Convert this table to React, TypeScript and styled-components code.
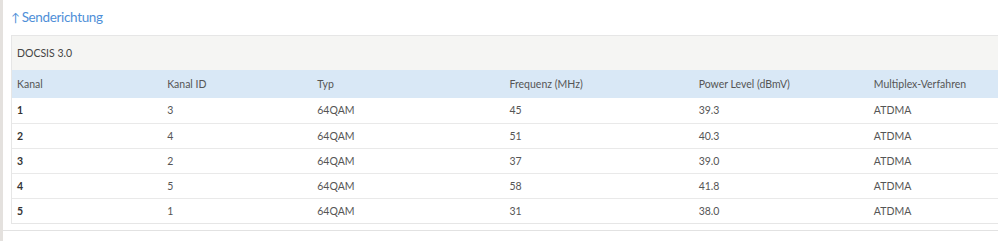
import React from "react";
import styled, { createGlobalStyle } from "styled-components";

const Global = createGlobalStyle`
  html, body { margin: 0; padding: 0; background: #ffffff; }
  body { font-family: Lato, "Open Sans", sans-serif; }
`;

const Page = styled.div`
  width: 998px;
  height: 241px;
  box-sizing: border-box;
  border-left: 3px solid #e4e1de;
  overflow: hidden;
`;

const Section = styled.section`
  border-bottom: 1px solid #e2e2e2;
  padding: 0 0 6px 8px;
`;

const Title = styled.h2`
  margin: 0;
  height: 35px;
  display: flex;
  align-items: center;
  gap: 2px;
  padding-bottom: 1px;
  box-sizing: border-box;
  font-size: 13.5px;
  letter-spacing: -0.35px;
  font-weight: 400;
  color: #4f8fd8;
`;

const Arrow = styled.span`
  font-size: 12px;
`;

const Panel = styled.div`
  width: 1000px;
  background: #f5f5f3;
  border: 1px solid #e6e6e6;
  border-right: none;
`;

const Caption = styled.div`
  height: 34px;
  display: flex;
  align-items: center;
  padding-left: 5px;
  font-size: 10.5px;
  color: #444;
`;

const Table = styled.table`
  width: 100%;
  border-collapse: collapse;
  table-layout: fixed;
  font-size: 10.5px;
`;

const HeadRow = styled.tr`
  background: #d9e8f6;
  height: 28px;
`;

const Th = styled.th<{ $w: number }>`
  box-sizing: border-box;
  width: ${(p) => p.$w}px;
  text-align: left;
  font-weight: 400;
  color: #555;
  padding: 0 0 0 5px;
`;

const Row = styled.tr`
  background: #fff;
  height: 25px;
  border-top: 1px solid #e9e9e9;
  &:first-of-type { border-top: none; }
`;

const Td = styled.td<{ $strong?: boolean }>`
  padding: 0 0 0 5px;
  color: ${(p) => (p.$strong ? "#333" : "#555")};
  font-weight: ${(p) => (p.$strong ? 700 : 400)};
`;

const cols = [
  { label: "Kanal", w: 150 },
  { label: "Kanal ID", w: 150 },
  { label: "Typ", w: 192 },
  { label: "Frequenz (MHz)", w: 189 },
  { label: "Power Level (dBmV)", w: 175 },
  { label: "Multiplex-Verfahren", w: 143 },
];

const rows = [
  ["1", "3", "64QAM", "45", "39.3", "ATDMA"],
  ["2", "4", "64QAM", "51", "40.3", "ATDMA"],
  ["3", "2", "64QAM", "37", "39.0", "ATDMA"],
  ["4", "5", "64QAM", "58", "41.8", "ATDMA"],
  ["5", "1", "64QAM", "31", "38.0", "ATDMA"],
];

export default function App() {
  return (
    <>
      <Global />
      <Page>
        <Section>
          <Title>
            <Arrow>↑</Arrow>
            <span>Senderichtung</span>
          </Title>
          <Panel>
            <Caption>DOCSIS 3.0</Caption>
            <Table>
              <thead>
                <HeadRow>
                  {cols.map((c) => (
                    <Th key={c.label} $w={c.w}>
                      {c.label}
                    </Th>
                  ))}
                </HeadRow>
              </thead>
              <tbody>
                {rows.map((r) => (
                  <Row key={r[0]}>
                    {r.map((v, i) => (
                      <Td key={i} $strong={i === 0}>
                        {v}
                      </Td>
                    ))}
                  </Row>
                ))}
              </tbody>
            </Table>
          </Panel>
        </Section>
      </Page>
    </>
  );
}
